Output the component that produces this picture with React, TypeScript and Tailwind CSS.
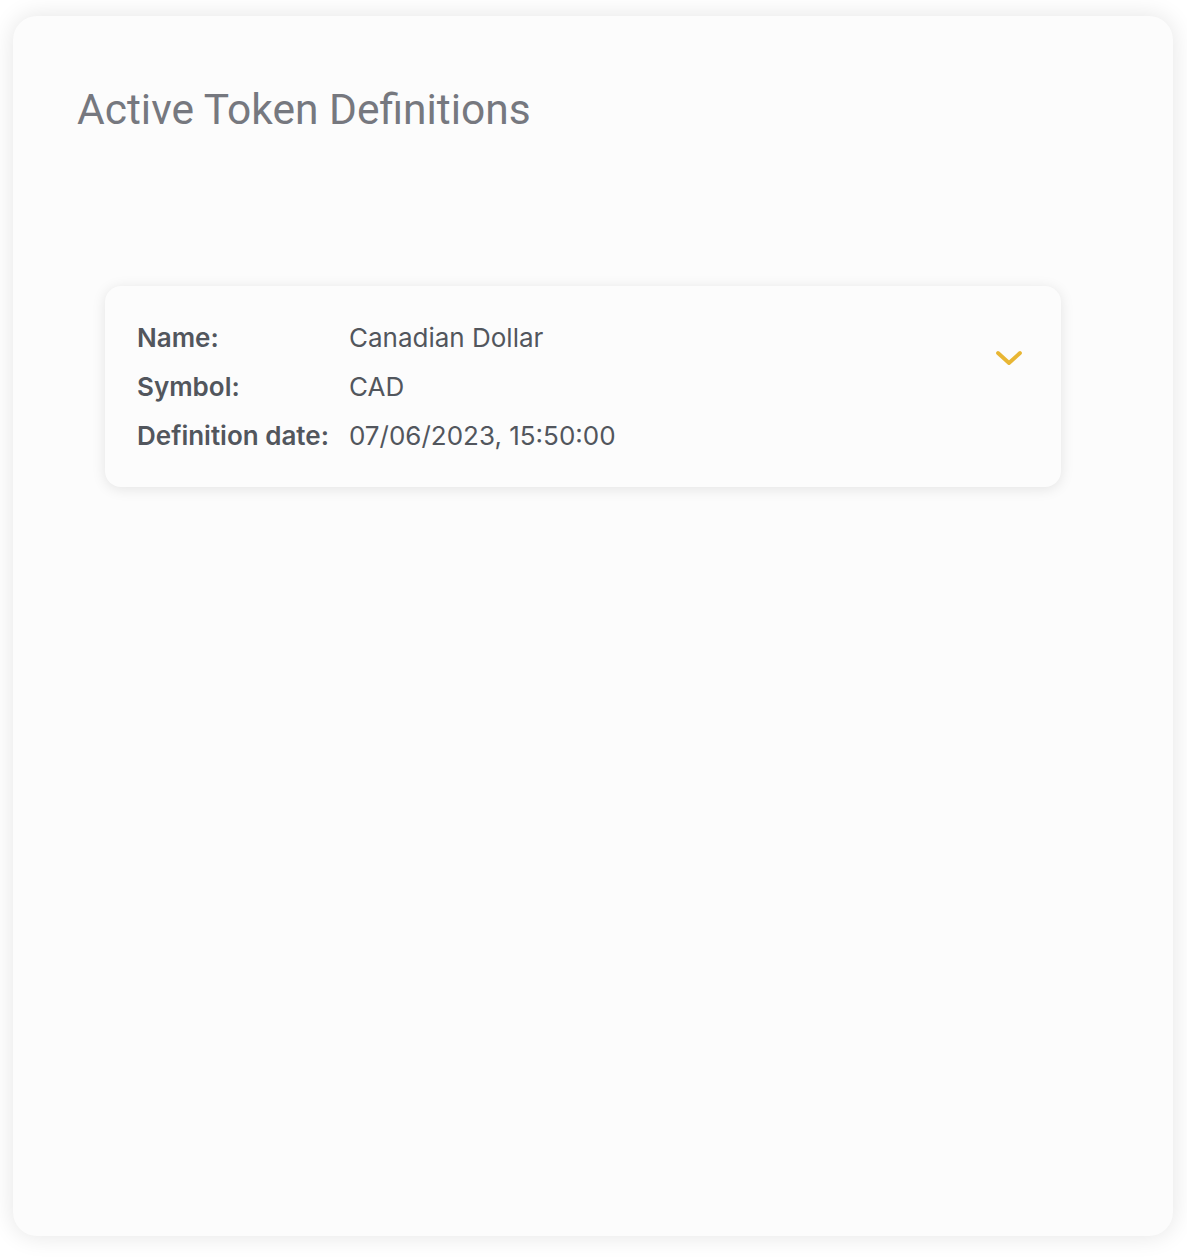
import React from "react";

const rows = [
  { label: "Name:", value: "Canadian Dollar" },
  { label: "Symbol:", value: "CAD" },
  { label: "Definition date:", value: "07/06/2023, 15:50:00" },
];

function TokenCard() {
  return (
    <div className="flex w-[956px] items-start justify-between rounded-2xl bg-[#fcfcfc] py-[27px] pl-8 pr-[38px] shadow-[0_2px_14px_rgba(0,0,0,0.1)]">
      <div
        className="grid grid-cols-[auto_1fr] gap-x-5 text-[26px] leading-[49px] text-[#52565d]"
        style={{ fontFamily: "Inter, sans-serif" }}
      >
        {rows.map((r) => (
          <React.Fragment key={r.label}>
            <span className="font-semibold">{r.label}</span>
            <span>{r.value}</span>
          </React.Fragment>
        ))}
      </div>
      <button className="mt-[36px] text-[#e8b634]">
        <svg width="28" height="18" viewBox="0 0 28 18" fill="none">
          <path d="M3 4l11 10L25 4" stroke="currentColor" strokeWidth="3.8" strokeLinecap="round" strokeLinejoin="round" />
        </svg>
      </button>
    </div>
  );
}

export default function App() {
  return (
    <div className="min-h-screen bg-white pl-[13px] pt-4">
      <div className="h-[1220px] w-[1160px] rounded-3xl bg-[#fcfcfc] shadow-[0_0_24px_rgba(0,0,0,0.11)]">
        <h1
          className="pl-[64px] pt-[68px] text-[42.5px] font-normal leading-[52px] text-[#76787f]"
          style={{ fontFamily: "Roboto, sans-serif" }}
        >
          Active Token Definitions
        </h1>
        <div className="mt-[150px] pl-[92px]">
          <TokenCard />
        </div>
      </div>
    </div>
  );
}
